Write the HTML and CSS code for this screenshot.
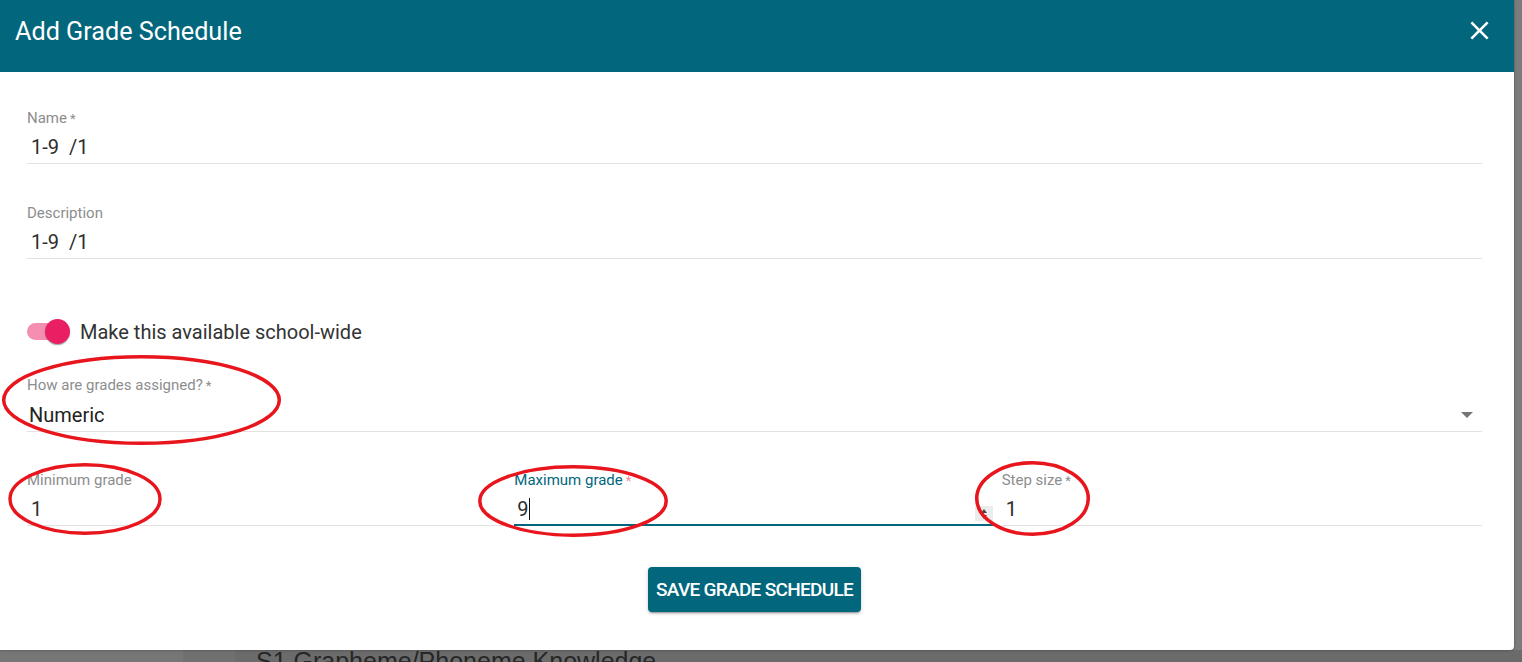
FILE: index.html
```html
<!DOCTYPE html>
<html lang="en">
<head>
<meta charset="utf-8">
<title>Add Grade Schedule</title>
<link rel="stylesheet" href="styles.css">
</head>
<body>
<div class="dialog">
  <header class="dlg-head">
    <h1 class="dlg-title">Add Grade Schedule</h1>
    <button class="close-btn" aria-label="Close">
      <svg class="close-ico" viewBox="0 0 24 24" width="31" height="31"><path fill="#fff" d="M19 6.41L17.59 5 12 10.59 6.41 5 5 6.41 10.59 12 5 17.59 6.41 19 12 13.41 17.59 19 19 17.59 13.41 12z"/></svg>
    </button>
  </header>
  <div class="dlg-body">
    <div class="field">
      <div class="lbl">Name<span class="req">*</span></div>
      <div class="val">1-9  /1</div>
    </div>
    <div class="field f-desc">
      <div class="lbl">Description</div>
      <div class="val">1-9  /1</div>
    </div>
    <div class="toggle-row">
      <div class="switch"><span class="track"></span><span class="thumb"></span></div>
      <span class="toggle-lbl">Make this available school-wide</span>
    </div>
    <div class="field f-select">
      <div class="lbl">How are grades assigned?<span class="req">*</span></div>
      <div class="val sel-val"><span class="sel-text">Numeric</span><span class="arrow"></span></div>
    </div>
    <div class="num-row">
      <div class="field">
        <div class="lbl">Minimum grade</div>
        <div class="val">1</div>
      </div>
      <div class="field focused">
        <div class="lbl">Maximum grade<span class="req">*</span></div>
        <div class="val">9<span class="caret"></span><span class="spinner"><span class="sp-up"></span><span class="sp-dn"></span></span></div>
      </div>
      <div class="field">
        <div class="lbl">Step size<span class="req">*</span></div>
        <div class="val">1</div>
      </div>
    </div>
    <button class="save-btn">Save grade schedule</button>
  </div>
  <svg class="marks" width="1514" height="650" viewBox="0 0 1514 650">
    <ellipse cx="141.5" cy="400" rx="137.8" ry="43.3"/>
    <ellipse cx="85" cy="499" rx="75" ry="34.3"/>
    <ellipse cx="573" cy="501" rx="93.2" ry="34.2"/>
    <ellipse cx="1032.5" cy="498.5" rx="55.8" ry="35.8"/>
  </svg>
</div>
<div class="behind">
  <h2 class="behind-title">S1 Grapheme/Phoneme Knowledge</h2>
</div>
</body>
</html>
```
FILE: styles.css
```css
html, body {
  margin: 0;
  padding: 0;
}
body {
  width: 1522px;
  height: 662px;
  overflow: hidden;
  background: #7c7c7c;
  font-family: Roboto, "Noto Sans", "Liberation Sans", sans-serif;
}
.dialog {
  position: relative;
  width: 1514px;
  height: 650px;
  background: #fff;
  border-bottom-right-radius: 4px;
  box-shadow: 0 0 3px rgba(0,0,0,0.35);
  display: flex;
  flex-direction: column;
}
.dlg-head {
  height: 72px;
  flex: none;
  background: #02667c;
  display: flex;
  align-items: flex-start;
  justify-content: space-between;
  padding: 0 19px 0 15px;
  box-sizing: border-box;
}
.dlg-title {
  margin: 17px 0 0 0;
  font-size: 25.2px;
  line-height: 30px;
  font-weight: 400;
  color: #fff;
}
.close-btn {
  margin-top: 15px;
  padding: 0;
  border: 0;
  background: transparent;
  width: 31px;
  height: 31px;
}
.close-ico {
  display: block;
}
.dlg-body {
  padding: 37px 32px 0 27px;
  display: flex;
  flex-direction: column;
}
.field {
  display: flex;
  flex-direction: column;
  min-width: 0;
}
.lbl {
  height: 18px;
  font-size: 15px;
  line-height: 18px;
  color: #8d8d8d;
  white-space: nowrap;
}
.req {
  font-size: 13px;
  line-height: 10px;
  margin-left: 3px;
}
.val {
  position: relative;
  height: 24px;
  margin-top: 8px;
  padding: 0 0 4px 4px;
  font-size: 20px;
  line-height: 24px;
  color: #2e2e2e;
  border-bottom: 1px solid #e2e2e2;
  white-space: pre;
}
.f-desc {
  margin-top: 40px;
}
.toggle-row {
  margin-top: 60px;
  height: 25px;
  display: flex;
  align-items: center;
}
.switch {
  position: relative;
  width: 45px;
  height: 25px;
  margin-right: 8px;
  flex: none;
}
.track {
  position: absolute;
  left: 0;
  top: 4px;
  width: 40px;
  height: 17px;
  border-radius: 9px;
  background: #f48fb1;
}
.thumb {
  position: absolute;
  left: 18px;
  top: 0;
  width: 25px;
  height: 25px;
  border-radius: 50%;
  background: #e91e63;
  box-shadow: 0 2px 1px -1px rgba(0,0,0,.2), 0 1px 1px 0 rgba(0,0,0,.14), 0 1px 3px 0 rgba(0,0,0,.12);
}
.toggle-lbl {
  font-size: 20px;
  line-height: 24px;
  color: #333;
}
.f-select {
  margin-top: 32px;
}
.sel-val {
  margin-top: 9px;
  padding-left: 2px;
  display: flex;
  align-items: center;
  justify-content: space-between;
  color: #222;
}
.arrow {
  width: 0;
  height: 0;
  border-left: 6px solid transparent;
  border-right: 6px solid transparent;
  border-top: 6px solid #757575;
  margin-right: 9px;
  margin-top: -1px;
}
.num-row {
  margin-top: 39px;
  display: grid;
  grid-template-columns: 1fr 1fr 1fr;
  column-gap: 7px;
}
.focused .lbl {
  color: #02667c;
}
.focused .req {
  color: #ef8a8f;
}
.focused .val {
  border-bottom: 2px solid #02667c;
  padding-bottom: 3px;
  padding-left: 3px;
}
.caret {
  display: inline-block;
  width: 1px;
  height: 22px;
  background: #111;
  vertical-align: -4px;
}
.spinner {
  position: absolute;
  right: 2px;
  top: 9px;
  width: 18px;
  height: 15px;
  background: #ececec;
  display: flex;
  flex-direction: column;
  align-items: center;
  justify-content: center;
  gap: 2px;
}
.sp-up {
  width: 0;
  height: 0;
  border-left: 3px solid transparent;
  border-right: 3px solid transparent;
  border-bottom: 4px solid #444;
}
.sp-dn {
  width: 0;
  height: 0;
  border-left: 3px solid transparent;
  border-right: 3px solid transparent;
  border-top: 4px solid #444;
}
.save-btn {
  align-self: center;
  margin-top: 41px;
  width: 213px;
  height: 45px;
  padding: 0;
  border: 0;
  border-radius: 4px;
  background: #02667c;
  color: #fff;
  font-family: Roboto, "Liberation Sans", sans-serif;
  font-size: 19px;
  font-weight: 500;
  letter-spacing: -0.7px;
  text-transform: uppercase;
  box-shadow: 0 3px 1px -2px rgba(0,0,0,.2), 0 2px 2px 0 rgba(0,0,0,.14), 0 1px 5px 0 rgba(0,0,0,.12);
}
.marks {
  position: absolute;
  left: 0;
  top: 0;
  pointer-events: none;
}
.marks ellipse {
  fill: none;
  stroke: #e8151d;
  stroke-width: 3.5;
}
.behind {
  height: 12px;
  overflow: hidden;
  background: linear-gradient(to right, #767676 0, #767676 183px, #707070 183px, #707070 235px, #6b6b6b 235px);
  padding-left: 256px;
}
.behind-title {
  margin: 0;
  font-family: "Liberation Sans", Arial, sans-serif;
  font-size: 25px;
  font-weight: 400;
  line-height: 22px;
  color: #262626;
}
```
